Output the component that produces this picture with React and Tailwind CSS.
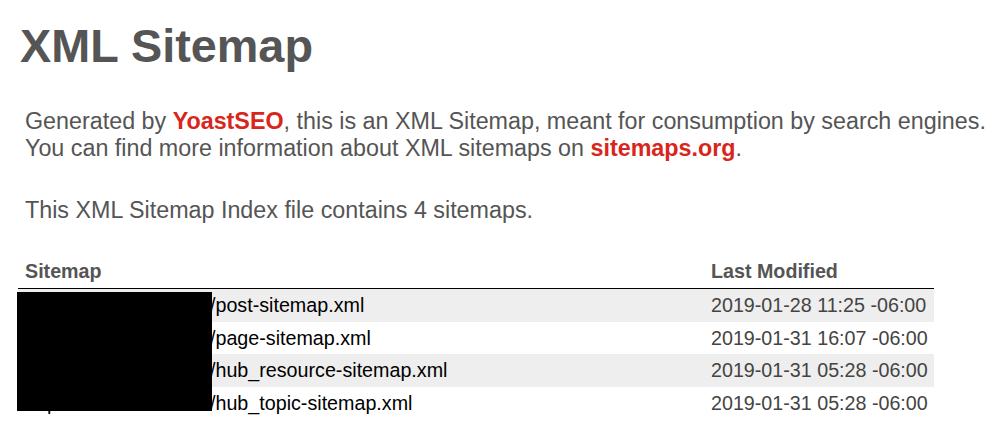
export default function App() {
  const rows = [
    { path: "/post-sitemap.xml", date: "2019-01-28 11:25 -06:00" },
    { path: "/page-sitemap.xml", date: "2019-01-31 16:07 -06:00" },
    { path: "/hub_resource-sitemap.xml", date: "2019-01-31 05:28 -06:00" },
    { path: "/hub_topic-sitemap.xml", date: "2019-01-31 05:28 -06:00" },
  ];
  return (
    <div className="bg-white w-[1000px] h-[440px] overflow-hidden pl-[18px] font-['Liberation_Sans',Arial,sans-serif] text-[#555]">
      <h1 className="pt-[23px] pl-[2px] text-[46.8px] leading-[46px] font-bold">XML Sitemap</h1>
      <div className="pl-[7px]">
        <p className="mt-[38.5px] text-[23.3px] leading-[27px] whitespace-nowrap">
          Generated by <a className="text-[#d9261c] font-bold">YoastSEO</a>, this is an XML Sitemap, meant for consumption by search engines.
          <br />
          You can find more information about XML sitemaps on <a className="text-[#d9261c] font-bold">sitemaps.org</a>.
        </p>
        <p className="mt-[35px] text-[23.3px] leading-[27px]">This XML Sitemap Index file contains 4 sitemaps.</p>
      </div>
      <div className="relative mt-[29px] w-[916px]">
        <table className="w-[916px] border-separate border-spacing-0 text-[19.7px] leading-[24px]">
          <thead>
            <tr>
              <th className="w-[686px] text-left font-bold pl-[7px] pt-[6px] pb-[5.5px] border-b border-black">Sitemap</th>
              <th className="text-left font-bold pl-[7px] pt-[6px] pb-[5.5px] border-b border-black">Last Modified</th>
            </tr>
          </thead>
          <tbody>
            {rows.map((r, i) => (
              <tr key={i} className={i % 2 === 0 ? "bg-[#eeeeee]" : "bg-white"}>
                <td className="pl-[7px] h-[32.5px] py-0 leading-[24.5px] text-black whitespace-nowrap">
                  <span className="inline-block w-[185px] overflow-hidden align-bottom">https://www.site.com</span>
                  {r.path}
                </td>
                <td className="pl-[7px] h-[32.5px] py-0 leading-[24.5px] text-[#444] whitespace-nowrap">{r.date}</td>
              </tr>
            ))}
          </tbody>
        </table>
        <div className="absolute left-[-1px] top-[39.5px] w-[195px] h-[119px] bg-black" />
      </div>
    </div>
  );
}
